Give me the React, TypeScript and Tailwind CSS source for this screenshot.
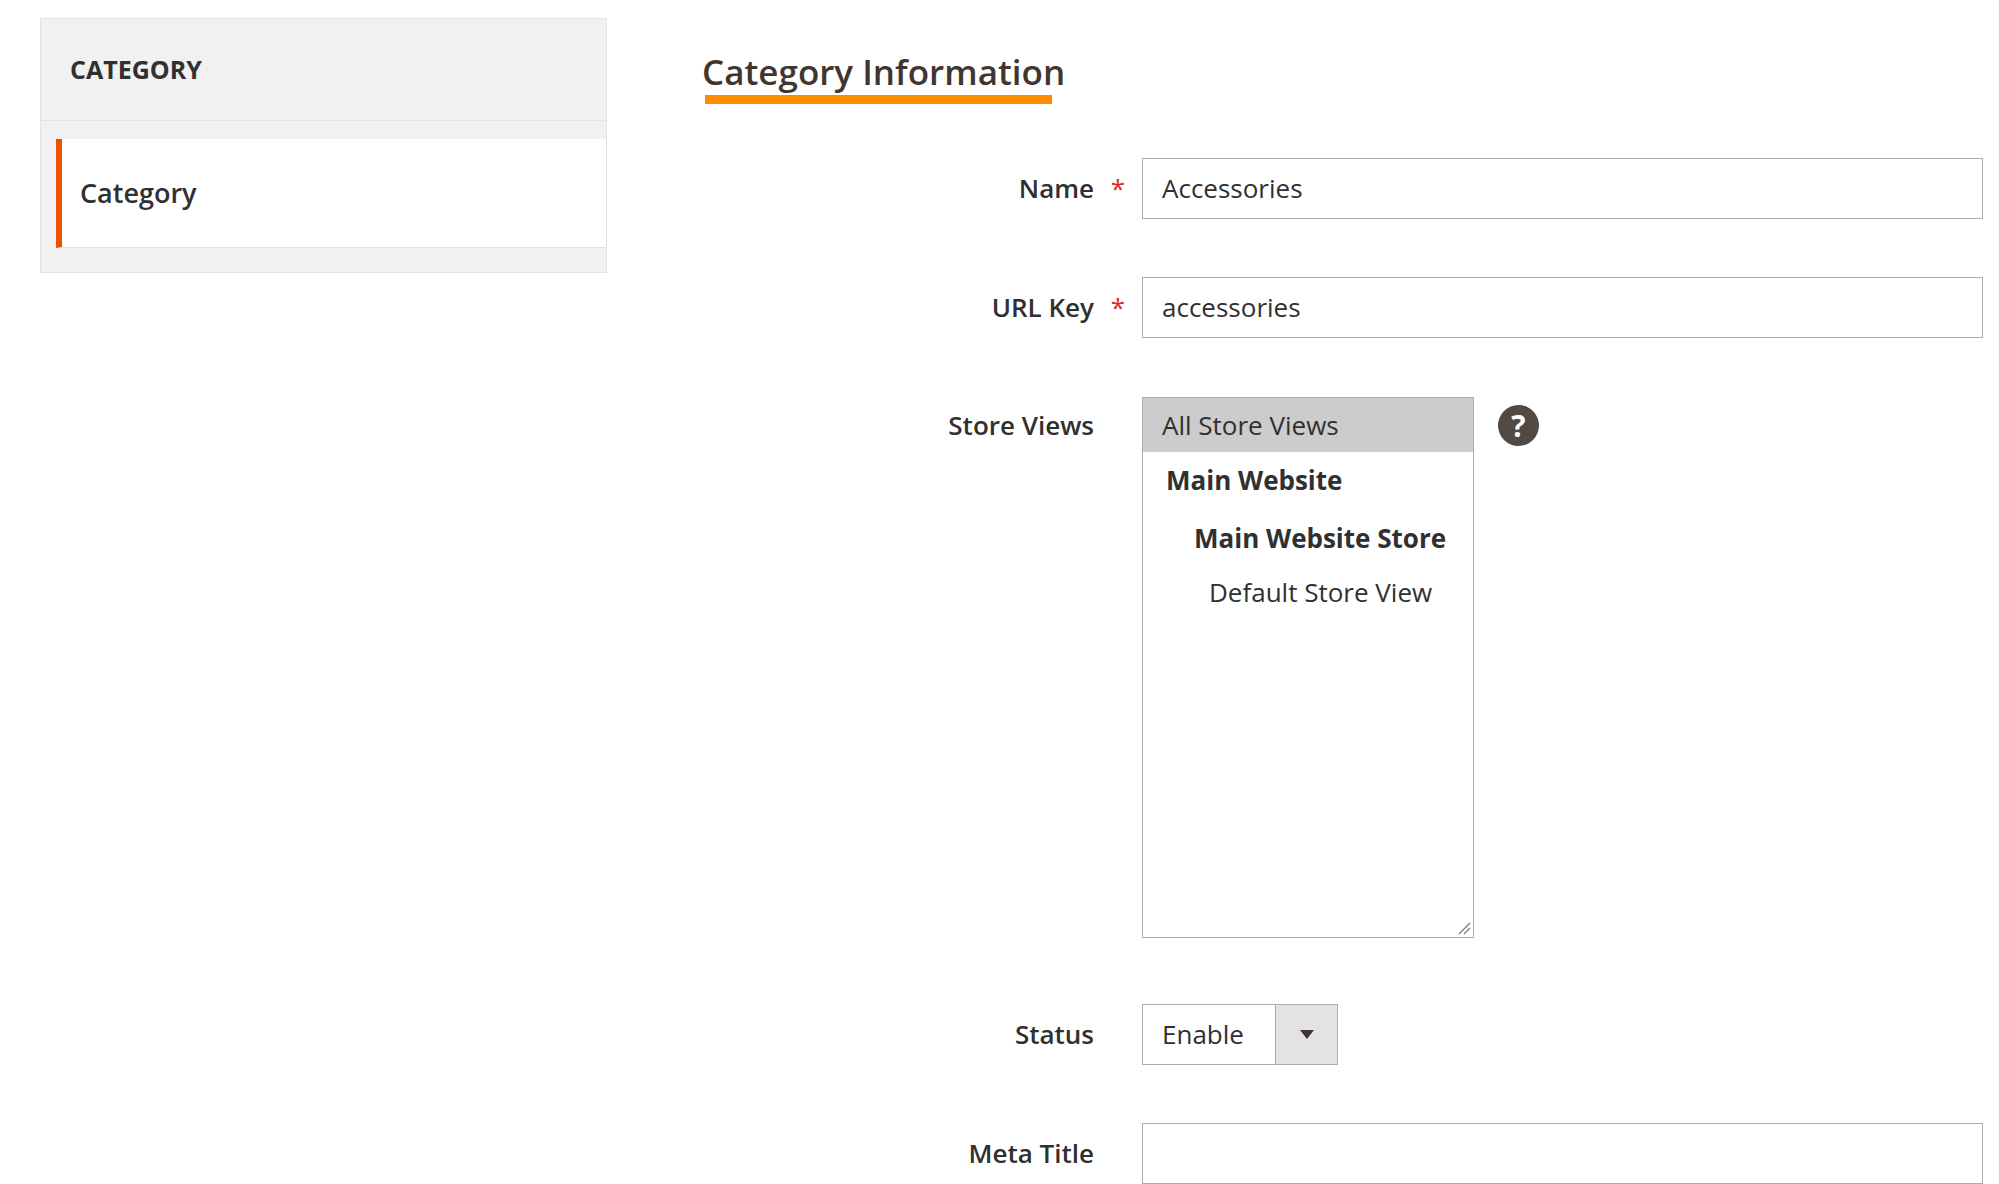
export default function App() {
  const f = { fontFamily: '"Open Sans", "Liberation Sans", sans-serif' };
  const Label = ({ t, req }: { t: string; req?: boolean }) => (
    <div className="w-[1152px] flex justify-end items-center shrink-0 pr-[10px]">
      <span className="font-semibold text-[26px] text-[#303030]">{t}</span>
      <span className="w-[48px] text-center text-[#e22626] text-[26px]">{req ? "*" : ""}</span>
    </div>
  );
  return (
    <div className="w-[1999px] h-[1184px] bg-white relative overflow-hidden" style={f}>
      <div className="absolute left-[40px] top-[18px] w-[567px] bg-[#f1f1f1] border border-[#e3e3e3]">
        <div className="h-[102px] flex items-center pl-[29px] text-[25px] font-bold text-[#303030] border-b border-[#e3e3e3]">CATEGORY</div>
        <div className="h-[18px]" />
        <div className="h-[109px] bg-white ml-[15px] border-l-[6px] border-[#eb5202] flex items-center pl-[18px] text-[27px] font-semibold text-[#303030] border-b border-b-[#e3e3e3]">Category</div>
        <div className="h-[24px]" />
      </div>
      <div className="absolute left-0 top-0 w-full">
        <div className="pl-[702px] pt-[50px]">
          <div className="inline-block text-[35px] font-semibold text-[#41362f] leading-[44px]">Category Information</div>
          <div className="ml-[3px] w-[347px] h-[9px] bg-[#ff8c00] mt-[1px]" />
        </div>
        <div className="flex items-center mt-[53px] h-[61px]">
          <div className="w-[1152px] flex justify-end items-center pr-[0px]" />
        </div>
      </div>
      <div className="absolute left-0 top-[158px] w-full flex flex-col">
        <div className="flex h-[61px]"><div className="-ml-0 flex"><Label t="Name" req /></div>
          <div className="w-[841px] -ml-[10px] border border-[#adadad] flex items-center pl-[19px] text-[26px] text-[#303030]">Accessories</div></div>
        <div className="flex h-[61px] mt-[58px]"><Label t="URL Key" req />
          <div className="w-[841px] -ml-[10px] border border-[#adadad] flex items-center pl-[19px] text-[26px] text-[#303030]">accessories</div></div>
        <div className="flex mt-[59px] items-start">
          <div className="h-[56px] flex items-center"><Label t="Store Views" /></div>
          <div className="-ml-[10px] w-[332px] h-[541px] border border-[#adadad] relative text-[26px] text-[#303030]">
            <div className="h-[54px] bg-[#cccccc] flex items-center pl-[19px]">All Store Views</div>
            <div className="pl-[23px] font-bold h-[56px] flex items-center">Main Website</div>
            <div className="pl-[51px] font-bold h-[60px] flex items-center">Main Website Store</div>
            <div className="pl-[66px] h-[48px] flex items-center">Default Store View</div>
            <svg className="absolute right-[2px] bottom-[2px]" width="14" height="14" viewBox="0 0 14 14"><path d="M2 13L13 2M7 13L13 7" stroke="#777" strokeWidth="1.2" /></svg>
          </div>
          <div className="ml-[24px] mt-[8px] w-[41px] h-[41px] rounded-full bg-[#514943] flex items-center justify-center text-white font-bold text-[30px] leading-none">?</div>
        </div>
        <div className="flex h-[61px] mt-[66px]"><Label t="Status" />
          <div className="-ml-[10px] w-[196px] border border-[#adadad] flex text-[26px] text-[#303030]">
            <div className="flex-1 flex items-center pl-[19px]">Enable</div>
            <div className="w-[62px] bg-[#e3e3e3] border-l border-[#adadad] flex items-center justify-center">
              <svg width="14" height="9" viewBox="0 0 14 9"><path d="M0 0h14L7 9z" fill="#41362f" /></svg>
            </div>
          </div></div>
        <div className="flex h-[61px] mt-[58px]"><Label t="Meta Title" />
          <div className="w-[841px] -ml-[10px] border border-[#adadad]" /></div>
      </div>
    </div>
  );
}
